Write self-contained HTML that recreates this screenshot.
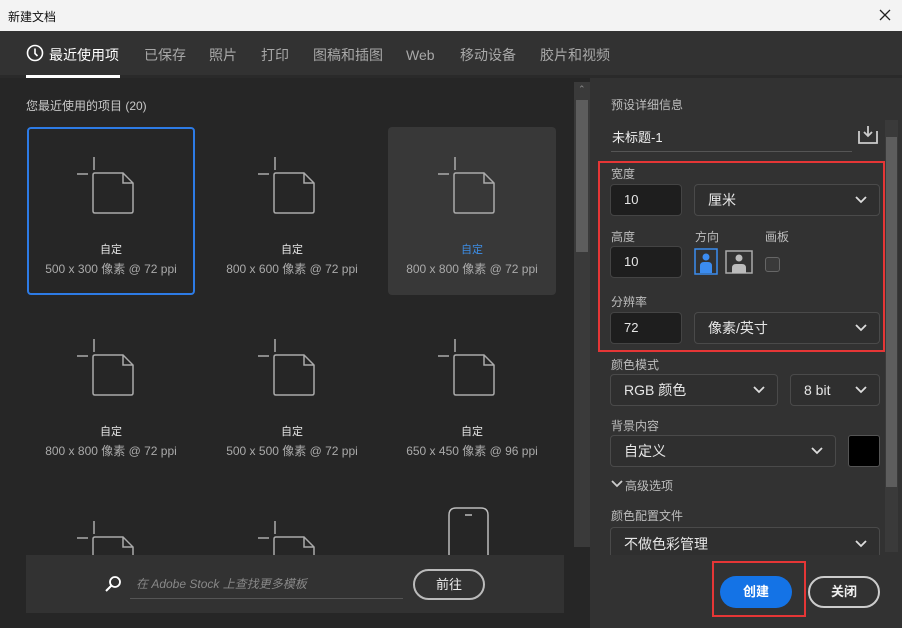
<!DOCTYPE html>
<html><head><meta charset="utf-8"><style>
*{margin:0;padding:0;box-sizing:border-box}
body{width:902px;height:628px;overflow:hidden;background:#262626;font-family:"Liberation Sans","Noto Sans CJK SC",sans-serif;position:relative;color:#ddd}
.a{position:absolute}
.title{left:0;top:0;width:902px;height:31px;background:#f3f3f3;color:#111;font-size:12px}
.tabs{left:0;top:31px;width:902px;height:47px;background:#323232;border-bottom:3px solid #2a2a2a}
.tab{position:absolute;top:14px;font-size:14px;color:#a8a8a8}
.card{position:absolute;width:168px;height:168px;border-radius:4px}
.card svg{position:absolute;left:48px;top:28px}
.card .n{position:absolute;top:114px;width:100%;text-align:center;font-size:11px;color:#e6e6e6}
.card .d{position:absolute;top:133px;width:100%;text-align:center;font-size:12px;color:#aaa}
.lbl{position:absolute;font-size:12px;color:#bdbdbd}
.box{position:absolute;border:1px solid #4a4a4a;border-radius:4px;background:#2f2f2f;font-size:14px;color:#e6e6e6;padding-left:13px}
.inp{position:absolute;border:1px solid #444;border-radius:4px;background:#1e1e1e;font-size:13px;color:#e6e6e6;padding-left:13px}
.chev{position:absolute;right:12px;top:50%;margin-top:-4px}
</style></head><body>
<div class="a title"><span class="a" style="left:8px;top:8px">新建文档</span><svg class="a" style="left:879px;top:9px" width="12" height="12"><path d="M1 1L11 11M11 1L1 11" stroke="#222" stroke-width="1.3"/></svg></div>
<div class="a tabs">
<svg class="a" style="left:26px;top:13px" width="18" height="18" viewBox="0 0 18 18"><circle cx="9" cy="9" r="7.5" fill="none" stroke="#fff" stroke-width="1.6"/><path d="M9 4.5V9.5L11.5 12" fill="none" stroke="#fff" stroke-width="1.6"/></svg>
<span class="tab" style="left:49px;color:#fff">最近使用项</span>
<div class="a" style="left:26px;top:44px;width:94px;height:3px;background:#fff"></div>
<span class="tab" style="left:144px">已保存</span>
<span class="tab" style="left:209px">照片</span>
<span class="tab" style="left:261px">打印</span>
<span class="tab" style="left:313px">图稿和插图</span>
<span class="tab" style="left:406px;top:16px">Web</span>
<span class="tab" style="left:460px">移动设备</span>
<span class="tab" style="left:540px">胶片和视频</span>
</div>
<div class="a" style="left:26px;top:97px;font-size:12px;color:#c8c8c8">您最近使用的项目 (20)</div>

<div class="card" style="left:27px;top:127px;border:2px solid #2d7be5"><svg width="60" height="60" style="left:46px;top:26px"><g fill="none" stroke="#aaa" stroke-width="1.5"><path d="M2 19H13M19 2V15M18 20Q18 18 20 18H48L58 28V56Q58 58 56 58H20Q18 58 18 56Z M48 18V28H58"/></g></svg><div class="n" style="top:112px">自定</div><div class="d" style="top:131px">500 x 300 像素 @ 72 ppi</div></div>
<div class="card" style="left:208px;top:127px"><svg width="60" height="60"><g fill="none" stroke="#aaa" stroke-width="1.5"><path d="M2 19H13M19 2V15M18 20Q18 18 20 18H48L58 28V56Q58 58 56 58H20Q18 58 18 56Z M48 18V28H58"/></g></svg><div class="n">自定</div><div class="d">800 x 600 像素 @ 72 ppi</div></div>
<div class="card" style="left:388px;top:127px;background:#383838"><svg width="60" height="60"><g fill="none" stroke="#aaa" stroke-width="1.5"><path d="M2 19H13M19 2V15M18 20Q18 18 20 18H48L58 28V56Q58 58 56 58H20Q18 58 18 56Z M48 18V28H58"/></g></svg><div class="n" style="color:#3d8ee6">自定</div><div class="d">800 x 800 像素 @ 72 ppi</div></div>

<div class="card" style="left:27px;top:309px"><svg width="60" height="60"><g fill="none" stroke="#aaa" stroke-width="1.5"><path d="M2 19H13M19 2V15M18 20Q18 18 20 18H48L58 28V56Q58 58 56 58H20Q18 58 18 56Z M48 18V28H58"/></g></svg><div class="n">自定</div><div class="d">800 x 800 像素 @ 72 ppi</div></div>
<div class="card" style="left:208px;top:309px"><svg width="60" height="60"><g fill="none" stroke="#aaa" stroke-width="1.5"><path d="M2 19H13M19 2V15M18 20Q18 18 20 18H48L58 28V56Q58 58 56 58H20Q18 58 18 56Z M48 18V28H58"/></g></svg><div class="n">自定</div><div class="d">500 x 500 像素 @ 72 ppi</div></div>
<div class="card" style="left:388px;top:309px"><svg width="60" height="60"><g fill="none" stroke="#aaa" stroke-width="1.5"><path d="M2 19H13M19 2V15M18 20Q18 18 20 18H48L58 28V56Q58 58 56 58H20Q18 58 18 56Z M48 18V28H58"/></g></svg><div class="n">自定</div><div class="d">650 x 450 像素 @ 96 ppi</div></div>

<div class="card" style="left:27px;top:491px;height:65px;overflow:hidden"><svg width="60" height="60"><g fill="none" stroke="#aaa" stroke-width="1.5"><path d="M2 19H13M19 2V15M18 20Q18 18 20 18H48L58 28V56Q58 58 56 58H20Q18 58 18 56Z M48 18V28H58"/></g></svg></div>
<div class="card" style="left:208px;top:491px;height:65px;overflow:hidden"><svg width="60" height="60"><g fill="none" stroke="#aaa" stroke-width="1.5"><path d="M2 19H13M19 2V15M18 20Q18 18 20 18H48L58 28V56Q58 58 56 58H20Q18 58 18 56Z M48 18V28H58"/></g></svg></div>
<svg class="a" style="left:445px;top:505px" width="50" height="52"><path d="M4 52V10Q4 3 11 3H36Q43 3 43 10V52M20 10H27" fill="none" stroke="#bbb" stroke-width="1.5"/></svg>

<div class="a" style="left:26px;top:555px;width:538px;height:58px;background:#323232"></div>
<svg class="a" style="left:104px;top:575px" width="18" height="18"><circle cx="11" cy="7" r="5" fill="none" stroke="#fff" stroke-width="1.8"/><path d="M7.5 10.5L2 16" stroke="#fff" stroke-width="2"/></svg>
<div class="a" style="left:136px;top:575px;font-size:12px;color:#888;font-style:italic">在 Adobe Stock 上查找更多模板</div>
<div class="a" style="left:130px;top:598px;width:273px;height:1px;background:#555"></div>
<div class="a" style="left:413px;top:569px;width:72px;height:31px;border:2px solid #bbb;border-radius:16px;text-align:center;line-height:27px;font-size:13px;color:#eee">前往</div>

<div class="a" style="left:574px;top:82px;width:16px;height:465px;background:#3a3a3a"></div>
<div class="a" style="left:576px;top:100px;width:12px;height:152px;background:#5d5d5d"></div>
<div class="a" style="left:578px;top:84px;font-size:9px;color:#888">⌃</div>

<div class="a" style="left:590px;top:78px;width:312px;height:550px;background:#323232"></div>
<div class="a" style="left:885px;top:120px;width:13px;height:432px;background:#3a3a3a"></div>
<div class="a" style="left:886px;top:137px;width:11px;height:350px;background:#5d5d5d"></div>
<div class="lbl" style="left:611px;top:96px">预设详细信息</div>
<div class="a" style="left:612px;top:127px;font-size:13px;color:#eee">未标题-1</div>
<div class="a" style="left:611px;top:151px;width:241px;height:1px;background:#555"></div>
<svg class="a" style="left:857px;top:125px" width="22" height="20"><path d="M2 6V18H20V6M11 1V11M7 7L11 11L15 7" fill="none" stroke="#ccc" stroke-width="1.8"/></svg>

<div class="a" style="left:598px;top:161px;width:287px;height:191px;border:2px solid #e53636"></div>
<div class="lbl" style="left:611px;top:165px">宽度</div>
<div class="inp" style="left:610px;top:184px;width:72px;height:32px;line-height:30px">10</div>
<div class="box" style="left:694px;top:184px;width:186px;height:32px;line-height:30px">厘米<svg class="chev" width="12" height="8"><path d="M1 1L6 6L11 1" fill="none" stroke="#ddd" stroke-width="1.8"/></svg></div>
<div class="lbl" style="left:611px;top:228px">高度</div>
<div class="lbl" style="left:695px;top:228px">方向</div>
<div class="lbl" style="left:765px;top:228px">画板</div>
<div class="inp" style="left:610px;top:246px;width:72px;height:32px;line-height:30px">10</div>
<svg class="a" style="left:694px;top:248px" width="60" height="28"><rect x="1" y="1" width="22" height="25" fill="none" stroke="#3b8cf0" stroke-width="1.5"/><circle cx="12" cy="9" r="3.5" fill="#3b8cf0"/><path d="M6 25V18Q6 14 10 14H14Q18 14 18 18V25Z" fill="#3b8cf0"/><rect x="32" y="3" width="26" height="22" fill="none" stroke="#aaa" stroke-width="1.5"/><circle cx="45" cy="10" r="3.5" fill="#bbb"/><path d="M38 25V20Q38 16 42 16H48Q52 16 52 20V25Z" fill="#bbb"/></svg>
<div class="a" style="left:765px;top:257px;width:15px;height:15px;border:1px solid #666;border-radius:3px;background:#3a3a3a"></div>
<div class="lbl" style="left:611px;top:293px">分辨率</div>
<div class="inp" style="left:610px;top:312px;width:72px;height:32px;line-height:30px">72</div>
<div class="box" style="left:694px;top:312px;width:186px;height:32px;line-height:30px">像素/英寸<svg class="chev" width="12" height="8"><path d="M1 1L6 6L11 1" fill="none" stroke="#ddd" stroke-width="1.8"/></svg></div>

<div class="lbl" style="left:611px;top:356px">颜色模式</div>
<div class="box" style="left:610px;top:374px;width:168px;height:32px;line-height:30px">RGB 颜色<svg class="chev" width="12" height="8"><path d="M1 1L6 6L11 1" fill="none" stroke="#ddd" stroke-width="1.8"/></svg></div>
<div class="box" style="left:790px;top:374px;width:90px;height:32px;line-height:30px">8 bit<svg class="chev" width="12" height="8"><path d="M1 1L6 6L11 1" fill="none" stroke="#ddd" stroke-width="1.8"/></svg></div>
<div class="lbl" style="left:611px;top:417px">背景内容</div>
<div class="box" style="left:610px;top:435px;width:226px;height:32px;line-height:30px">自定义<svg class="chev" width="12" height="8"><path d="M1 1L6 6L11 1" fill="none" stroke="#ddd" stroke-width="1.8"/></svg></div>
<div class="a" style="left:848px;top:435px;width:32px;height:32px;background:#000;border:1px solid #555;border-radius:3px"></div>
<svg class="a" style="left:611px;top:480px" width="12" height="8"><path d="M1 1L6 6L11 1" fill="none" stroke="#ccc" stroke-width="1.8"/></svg>
<div class="lbl" style="left:625px;top:477px">高级选项</div>
<div class="lbl" style="left:611px;top:507px">颜色配置文件</div>
<div class="box" style="left:610px;top:527px;width:270px;height:28px;border-bottom:none;border-radius:4px 4px 0 0;line-height:32px">不做色彩管理<svg class="chev" width="12" height="8" style="margin-top:-2px"><path d="M1 1L6 6L11 1" fill="none" stroke="#ddd" stroke-width="1.8"/></svg></div>
<div class="a" style="left:590px;top:555px;width:312px;height:73px;background:#323232"></div>

<div class="a" style="left:712px;top:561px;width:94px;height:56px;border:2px solid #e53636"></div>
<div class="a" style="left:720px;top:576px;width:72px;height:32px;background:#1473e6;border-radius:16px;text-align:center;line-height:32px;font-size:13px;font-weight:bold;color:#fff">创建</div>
<div class="a" style="left:808px;top:576px;width:72px;height:32px;border:2px solid #ccc;border-radius:16px;text-align:center;line-height:28px;font-size:13px;font-weight:bold;color:#eee">关闭</div>
</body></html>
